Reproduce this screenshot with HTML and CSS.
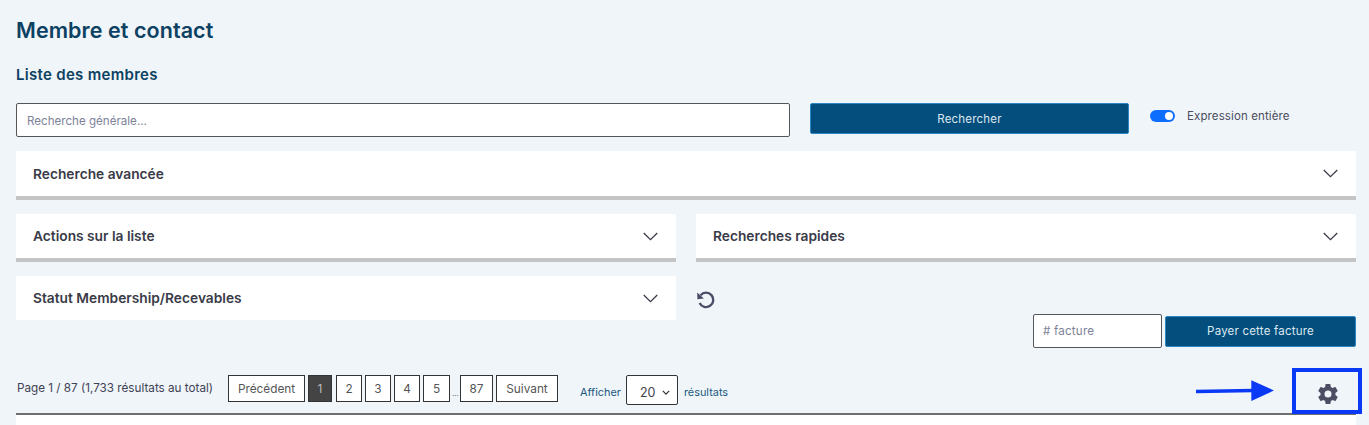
FILE: index.html
```html
<!DOCTYPE html>
<html lang="fr">
<head>
<meta charset="utf-8">
<title>Membre et contact</title>
<link rel="stylesheet" href="styles.css">
</head>
<body>
<main class="page">
  <h1 class="title">Membre et contact</h1>
  <h2 class="subtitle">Liste des membres</h2>
  <div class="search-row">
    <input class="field search-input" type="text" placeholder="Recherche générale...">
    <button class="btn btn-search" type="button">Rechercher</button>
    <div class="toggle-wrap">
      <span class="toggle"><span class="knob"></span></span>
      <span class="toggle-label">Expression entière</span>
    </div>
  </div>
  <section class="acc acc-full">
    <span>Recherche avancée</span>
    <svg class="chev" viewBox="0 0 14 8"><path d="M.7.7 7 7l6.3-6.3"/></svg>
  </section>
  <div class="two-col row-actions">
    <section class="acc acc-mid">
      <span>Actions sur la liste</span>
      <svg class="chev" viewBox="0 0 14 8"><path d="M.7.7 7 7l6.3-6.3"/></svg>
    </section>
    <section class="acc acc-mid">
      <span>Recherches rapides</span>
      <svg class="chev" viewBox="0 0 14 8"><path d="M.7.7 7 7l6.3-6.3"/></svg>
    </section>
  </div>
  <div class="two-col row-status">
    <section class="acc acc-flat">
      <span>Statut Membership/Recevables</span>
      <svg class="chev" viewBox="0 0 14 8"><path d="M.7.7 7 7l6.3-6.3"/></svg>
    </section>
    <div class="status-side">
      <svg class="reset" viewBox="0 0 20 20"><path d="M4.6 5.2A7.2 7.2 0 1 1 3.6 13" /><path class="fill" d="M1.2 2.6 1.4 9.2 7.9 8.6Z"/></svg>
      <div class="invoice">
        <input class="field invoice-input" type="text" placeholder="# facture">
        <button class="btn btn-pay" type="button">Payer cette facture</button>
      </div>
    </div>
  </div>
  <div class="pager-row">
    <span class="page-info">Page 1 / 87 (1,733 résultats au total)</span>
    <nav class="pager">
      <a class="pg pg-wide">Précédent</a>
      <a class="pg pg-on">1</a>
      <a class="pg">2</a>
      <a class="pg">3</a>
      <a class="pg">4</a>
      <a class="pg">5</a>
      <span class="dots">...</span>
      <a class="pg pg-87">87</a>
      <a class="pg pg-next">Suivant</a>
    </nav>
    <div class="per-page">
      <span class="pp-label">Afficher</span>
      <span class="select">20<svg viewBox="0 0 10 6"><path d="M1 1l4 4 4-4"/></svg></span>
      <span class="pp-label">résultats</span>
    </div>
    <div class="tools">
      <svg class="arrow" viewBox="0 0 80 22"><path class="shaft" d="M0 11.5 58 10.500"/><path class="fill" d="M56 0 79 10.500 56 21Z"/></svg>
      <div class="gear-box">
        <svg class="gear" viewBox="0 0 24 24"><path d="M19.4 13c.04-.33.06-.66.06-1s-.02-.67-.06-1l2.1-1.65c.2-.15.25-.42.12-.64l-2-3.46c-.12-.22-.39-.3-.6-.22l-2.49 1a7.300 7.300 0 0 0-1.690-.98l-.38-2.65A.49.49 0 0 0 14 2h-4c-.25 0-.46.18-.49.42l-.38 2.650c-.61.25-1.170.59-1.690.98l-2.490-1c-.23-.09-.490 0-.6.22l-2 3.460c-.13.220-.07.490.12.640L4.570 11c-.04.330-.07.670-.07 1s.03.670.07 1l-2.110 1.650c-.19.150-.25.420-.12.640l2 3.460c.12.220.39.300.6.220l2.490-1c.52.400 1.080.730 1.690.980l.38 2.650c.03.240.240.420.490.420h4c.25 0 .46-.18.49-.42l.38-2.650c.61-.25 1.170-.59 1.690-.98l2.490 1c.23.090.490 0 .6-.22l2-3.460c.12-.22.070-.49-.12-.64L19.400 13ZM12 15.500a3.500 3.500 0 1 1 0-7 3.500 3.500 0 0 1 0 7Z"/></svg>
      </div>
    </div>
  </div>
  <div class="table-top"></div>
</main>
</body>
</html>
```
FILE: styles.css
```css
* { box-sizing: border-box; }
html, body { margin: 0; height: 425px; overflow: hidden; }
body { background: #f0f5fa; font-family: Inter, "Liberation Sans", sans-serif; color: #3f4254; }
.page { padding: 18px 13px 0 16px; display: flex; flex-direction: column; height: 425px; overflow: hidden; }
.page > * { flex: none; }
.title { margin: 0; font-size: 21.500px; line-height: 24px; font-weight: 600; letter-spacing: .07px; color: #0c4162; height: 24px; }
.subtitle { margin: 22px 0 0; font-size: 15px; line-height: 22px; font-weight: 600; letter-spacing: .3px; color: #0c4162; }
.search-row { display: flex; align-items: flex-start; margin-top: 17px; }
.field { border: 1px solid #55565c; border-radius: 2px; background: #fff; font: 11.600px Inter, sans-serif; color: #333; outline: 0; }
.field::placeholder { color: #7e8299; opacity: 1; }
.search-input { width: 774px; height: 34px; padding: 1px 10px 0; }
.btn { border: 1px solid #2b87c4; border-radius: 2px; background: #034e7c; color: #dbe8f1; font: 11.500px Inter, sans-serif; letter-spacing: .2px; padding: 0; }
.btn-search { width: 319px; height: 31px; margin-left: 20px; }
.toggle-wrap { display: flex; align-items: center; height: 25px; margin-left: 21px; font-size: 11.500px; color: #4a4d5e; }
.toggle { width: 25px; height: 12px; border-radius: 6px; background: #0d6efd; position: relative; }
.knob { position: absolute; right: 2px; top: 2px; width: 8px; height: 8px; border-radius: 50%; background: #fff; }
.toggle-label { margin-left: 12px; letter-spacing: .12px; }
.acc { display: flex; align-items: center; justify-content: space-between; background: #fff; padding: 0 18px 0 17px; font-size: 13.750px; font-weight: 600; color: #3a3b48; border-bottom: 4px solid #c4c4c4; }
.acc-full { height: 49px; margin-top: 14px; }
.acc-mid { height: 48px; }
.acc-flat { height: 44px; border-bottom: 0; }
.chev { width: 15px; height: 9px; fill: none; stroke: #3a3b48; stroke-width: 1.200; }
.two-col { display: grid; grid-template-columns: 660px 660px; column-gap: 20px; align-items: start; }
.row-actions { margin-top: 14px; }
.row-status { margin-top: 14px; }
.status-side { display: flex; flex-direction: column; height: 72px; justify-content: space-between; }
.reset { width: 20px; height: 20px; margin: 14px 0 0; fill: none; stroke: #4a4d68; stroke-width: 2.400; }
.reset .fill { fill: #4a4d68; stroke: none; }
.invoice { display: flex; align-items: center; justify-content: flex-end; gap: 3px; }
.invoice-input { width: 129px; height: 34px; padding: 0 9px; letter-spacing: .2px; }
.btn-pay { width: 191px; height: 31px; }
.pager-row { display: flex; align-items: flex-start; height: 67px; padding-top: 27px; border-bottom: 2px solid #6f7074; }
.page-info { font-size: 11.700px; line-height: 27px; color: #3f4254; width: 212px; padding-left: 1px; white-space: nowrap; }
.pager { display: flex; align-items: center; height: 27px; gap: 3px; }
.pg { display: flex; align-items: center; justify-content: center; width: 26px; height: 27px; border: 1px solid #333; background: #fff; font-size: 11.800px; color: #555; }
.pg-wide { width: 77px; }
.pg-on { width: 24px; margin-right: 1px; background: #444; color: #bbb; border-color: #333; }
.pg-87 { width: 33px; }
.pg-next { width: 62px; }
.dots { font-size: 8px; color: #555; width: 6px; margin: 0 -1px 0 -1px; padding-top: 8px; }
.pg:nth-child(6) { width: 27px; }
.per-page { display: flex; align-items: center; margin: 0 0 0 22px; height: 30px; font-size: 10.900px; color: #205a80; }
.pp-label { padding-top: 4px; }
.select { display: flex; align-items: center; justify-content: space-between; width: 52px; height: 30px; margin: 0 6px 0 5px; padding: 4px 7px 0 13px; border: 1px solid #333; border-radius: 2px; background: #fff; font-size: 12.500px; color: #444; }
.select svg { width: 8px; height: 5px; fill: none; stroke: #333; stroke-width: 1.500; }
.tools { margin-left: auto; display: flex; align-items: center; margin-top: -7px; margin-right: -6px; }
.arrow { width: 79px; height: 22px; margin-right: 17px; }
.arrow .shaft { stroke: #0a39f5; stroke-width: 3.500; fill: none; }
.arrow .fill { fill: #0a39f5; }
.gear-box { width: 70px; height: 46px; border: 4px solid #0a39f5; display: flex; align-items: center; justify-content: center; padding: 5px 0 0 2px; }
.gear { width: 24px; height: 24px; fill: #4d4e63; }
.table-top { height: 40px; background: #fff; }
```
